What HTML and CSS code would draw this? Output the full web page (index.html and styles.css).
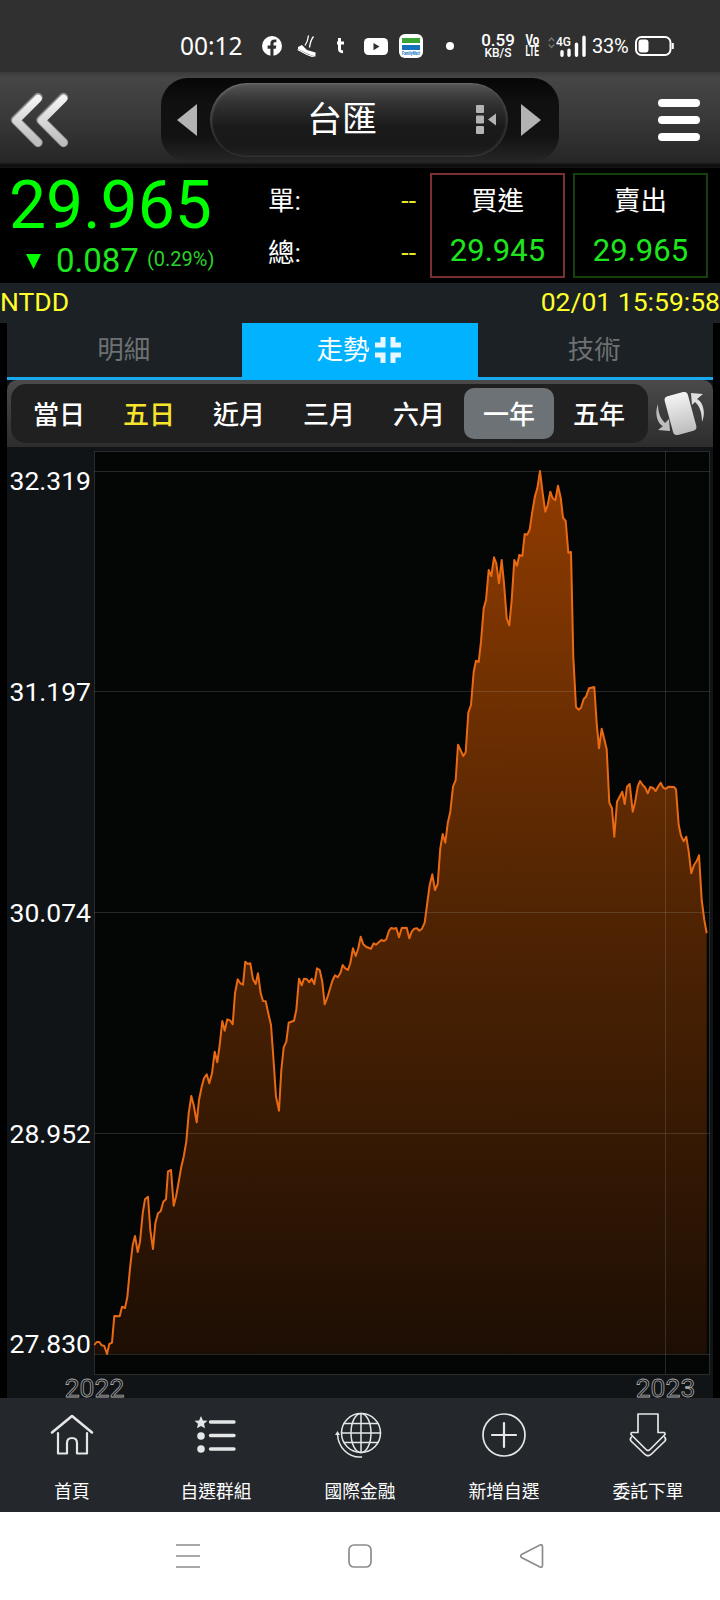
FILE: index.html
```html
<!DOCTYPE html>
<html lang="zh-Hant">
  <head>
    <meta charset="UTF-8">
    <meta name="viewport" content="width=device-width, initial-scale=1.0">
    <title>台匯 走勢</title>
    <link rel="stylesheet" href="styles.css">
  </head>
  <body>
    <div class="status">
      <span class="clock">00:12</span>
      <svg class="s-fb" width="20" height="20" viewBox="0 0 20 20">
        <circle cx="10" cy="10" r="10" fill="#fff"/>
        <path d="M8.4 20v-7.3H5.6V9.6h2.8V7.8c0-2.8 1.5-4.2 4-4.2h2v2.7H13c-1 0-1.5.5-1.5 1.5v1.8h2.8l-.5 3.1h-2.3V20z" fill="#303030"/>
      </svg>
      <svg class="s-shoe" width="20" height="22" viewBox="0 0 20 22">
        <path d="M1 12L5 10 10 15 18.5 17.500Q19.500 21 15 20.500L10 18.500 1 14z" fill="#fff"/>
        <path d="M.6 14.500L10 19.500 15 21.300 18.500 20.500M8 10.500Q11 6 11.500 .5M12.500 12.500Q13.500 5 16.500 1.500" fill="none" stroke="#fff" stroke-width="1.300"/>
      </svg>
      <svg class="s-t" width="8" height="16" viewBox="0 0 8 16">
        <path d="M2.500 0V11Q2.500 14 6 13.600M0 5H7" fill="none" stroke="#fff" stroke-width="3"/>
      </svg>
      <svg class="s-yt" width="24" height="17" viewBox="0 0 24 17">
        <rect width="24" height="17" rx="4.500" fill="#fff"/>
        <path d="M9.500 5v7.200l6-3.600z" fill="#303030"/>
      </svg>
      <svg class="s-fm" width="24" height="24" viewBox="0 0 24 24">
        <rect width="24" height="24" rx="6" fill="#fff"/>
        <rect x="3" y="4" width="18" height="5" fill="#3aa535"/>
        <rect x="3" y="11" width="18" height="5" fill="#1673bb"/>
        <text x="3" y="21" font-size="4.500" font-weight="bold" textLength="18" lengthAdjust="spacingAndGlyphs" fill="#1673bb">FamilyMart</text>
      </svg>
      <i class="s-dot"></i>
      <span class="speed"><b>0.59</b><b>KB/S</b></span>
      <span class="volte"><b>Vo</b><b>LTE</b></span>
      <svg class="s-signal" width="39" height="22" viewBox="0 0 39 22">
        <path d="M.8 6L3.500 3 6.200 6M.8 9.500L3.500 12.500 6.200 9.500" fill="none" stroke="#777" stroke-width="1.300"/>
        <text x="8" y="11" font-size="13.500" font-weight="500" textLength="15" lengthAdjust="spacingAndGlyphs" fill="#fff">4G</text>
        <path d="M14 16.500v3.500M21 15v5M28.500 9v11M36 2v18" stroke="#fff" stroke-width="3.400" stroke-linecap="round" transform="translate(0 .3)"/>
      </svg>
      <span class="percent">33%</span>
      <svg class="s-batt" width="40" height="20" viewBox="0 0 40 20">
        <rect x="1" y="1" width="34.500" height="18" rx="5.500" fill="none" stroke="#fff" stroke-width="2"/>
        <rect x="3.500" y="3.500" width="10" height="13" rx="3" fill="#fff"/>
        <path d="M37.800 7v6" stroke="#fff" stroke-width="2"/>
      </svg>
    </div>

    <header class="header">
      <svg class="back" width="60" height="56" viewBox="0 0 60 56">
        <defs>
          <linearGradient id="silver" x1="0" y1="0" x2="0" y2="1">
            <stop offset="0" stop-color="#f4f4f4"/>
            <stop offset="1" stop-color="#bdbdbd"/>
          </linearGradient>
        </defs>
        <path d="M28 5.500L5.500 28 28 50.500M53.500 5.500L31 28 53.500 50.500" fill="none" stroke="#8a8a8a" stroke-width="9.500" stroke-linecap="round" stroke-linejoin="round"/>
        <path d="M28 6.500L6 28.500 28 50.500M53.500 6.500L31.500 28.500 53.500 50.500" fill="none" stroke="url(#silver)" stroke-width="7.500" stroke-linecap="round" stroke-linejoin="round"/>
      </svg>
      <div class="picker">
        <svg width="20" height="32" viewBox="0 0 20 32"><path d="M0 16L20 0V32z" fill="#b3b3b3"/></svg>
        <div class="picker-name">
          <span>台匯</span>
          <svg width="20" height="30" viewBox="0 0 20 30">
            <g fill="#b3b3b3">
              <rect x="0" y="0" width="8" height="8" rx="1"/>
              <rect x="0" y="10.500" width="8" height="8" rx="1"/>
              <rect x="0" y="21" width="8" height="8" rx="1"/>
              <path d="M12 14.500L20 8.500V20.500z"/>
            </g>
          </svg>
        </div>
        <svg width="20" height="32" viewBox="0 0 20 32"><path d="M20 16L0 0V32z" fill="#b3b3b3"/></svg>
      </div>
      <div class="menu"><i></i><i></i><i></i></div>
    </header>

    <section class="quote">
      <div class="price">
        <div class="last">29.965</div>
        <div class="change">
          <svg width="15" height="15" viewBox="0 0 15 15"><path d="M0 0H15L7.500 15z" fill="#00ff00"/></svg>
          <span class="diff">0.087</span>
          <span class="rate">(0.29%)</span>
        </div>
      </div>
      <div class="volume">
        <div><span>單:</span><b>--</b></div>
        <div><span>總:</span><b>--</b></div>
      </div>
      <div class="deal buy"><span>買進</span><b>29.945</b></div>
      <div class="deal sell"><span>賣出</span><b>29.965</b></div>
    </section>

    <div class="info"><span>NTDD</span><span>02/01 15:59:58</span></div>

    <main class="panel">
      <nav class="tabs">
        <div class="tab">明細</div>
        <div class="tab active">走勢
          <svg width="26" height="26" viewBox="0 0 26 26">
            <path d="M0 8H8V0M18 0V8H26M0 18H8V26M26 18H18V26" fill="none" stroke="#e8f7ff" stroke-width="5"/>
          </svg>
        </div>
        <div class="tab">技術</div>
      </nav>

      <div class="toolbar">
        <div class="periods">
          <span>當日</span>
          <span class="yellow">五日</span>
          <span>近月</span>
          <span>三月</span>
          <span>六月</span>
          <span class="selected">一年</span>
          <span>五年</span>
        </div>
        <svg class="rotate" width="50" height="48" viewBox="0 0 50 48">
          <rect x="13.500" y="3.500" width="24" height="40" rx="4" transform="rotate(-15 25.500 23.500)" fill="url(#silver)"/>
          <path d="M3 14C-1 24 3 34 8 36L3 40 15 41 14 29 10 33C5 28 3 22 3 14z" fill="#bdbdbd"/>
          <path d="M47 32C51 22 48 12 42 9L48 4 36 3 37 15 40 12C45 16 47 23 47 32z" fill="#dedede"/>
        </svg>
      </div>

      <svg class="chart" width="706" height="951" viewBox="7 447 706 951">
        <defs>
          <linearGradient id="fade" gradientUnits="userSpaceOnUse" x1="0" y1="471" x2="0" y2="1354">
            <stop offset="0" stop-color="#903c00"/>
            <stop offset=".5" stop-color="#502403"/>
            <stop offset="1" stop-color="#1d0e04"/>
          </linearGradient>
        </defs>
        <rect x="94.500" y="451.500" width="615" height="923" fill="#040605"/>
        <path id="area" fill="url(#fade)"/>
        <path class="grid" d="M94 471.500H710M94 691.500H710M94 912.500H710M94 1133.500H710M94 1354.500H710M665.500 451V1374"/>
        <rect class="frame" x="94.500" y="451.500" width="615" height="923"/>
        <path id="line" class="line" d="M94.300 1345 96.700 1342 99.300 1342 101.700 1345.300 104.300 1346 107 1354 109.300 1344 112 1342.700 114.300 1316 119.700 1316.300 122 1306.700 125 1308 127.300 1297.300 130 1268.300 132.700 1245 135 1236 137.700 1252 140 1241.700 142.700 1213.300 145 1199.300 148 1196.700 150.300 1230 153 1249 155.300 1223.300 158 1213.300 160.700 1211.300 163.300 1201.700 166 1199.300 168 1171.300 171 1170 173.700 1205.700 176 1196.700 178.700 1181.700 181.300 1166.700 183.700 1156.700 186.300 1141.700 188.700 1113.300 191.300 1096 193.700 1105 196.700 1122.300 199 1100 201.700 1086.700 204 1078.300 206.700 1074.300 209.300 1083.300 212 1073.300 214.700 1051.700 217.300 1062.300 219.700 1045 222.300 1021 224.700 1030.700 227.300 1019.300 230.300 1020.700 232.700 1024.300 235 993.300 237.700 979.300 240.300 983.300 243 984.700 245.300 961.700 247.700 964 250.300 963.300 253 979.300 255.700 984 258 973.300 260.700 993.300 263 1001 265.700 1001.300 268.300 1013.300 271 1025 273.300 1056.700 276 1096.700 279 1110.700 281.300 1070 283.700 1047.300 286.300 1041.700 288.700 1022.700 294 1020.700 296.300 1010 299 978.700 301.700 985.300 304 978.700 307 979.300 309.300 982.300 311.700 978.700 314.300 984 317 968.300 319.700 970 322.300 981.700 324.700 1004.300 327.300 997.700 332.300 981 335 975.300 337.700 977.300 340.300 973.300 342.700 965 345.300 968.300 348 970 350.300 963.300 353 948.300 355.700 956 358.300 948.300 360.700 936.700 363.300 944.300 366 946.700 371 948.700 373.700 943.300 376 944.700 381.300 940 384 941 386.300 939.300 389 930.700 391.300 928 394 928.700 396.300 928 399 937.300 401.700 928 406.700 927.700 409.300 938.300 411.700 931.700 414.300 928.700 417 928.300 419.300 930.700 422 928.700 424.700 922.700 427 905 429.700 885 432.300 874.300 435 890 437.700 884 440.300 848.300 442.700 834 445.300 842.700 447.700 823.300 450.300 811.700 453 786.700 455.700 780 458 744.700 463.300 756 465.700 752.300 468.300 712.700 471 705 473.700 671.700 476 660.700 478.700 662 481 641.700 483.700 608.300 486 600 488.700 570 491.300 576 494 557.300 496.300 563.300 499 583.300 501.700 560 504 583.300 506.700 618.300 509.300 625.300 511.700 600 514.300 560 517 565.700 519.300 555 522.300 556 524.700 534 527.300 534.700 529.700 529.300 532.300 511.700 535 496 537.300 488.300 540 471 542.700 493.300 545.300 511.700 547.700 505 550.300 491.700 552.700 498.300 555.300 500.300 558 485.700 560.700 497.700 563 517.700 565.700 521 568.300 552.700 571 552 573.300 656.700 576 707 578.700 709.700 581 707.700 583.700 699 586 696.700 589 688.300 594.300 687 596.700 723.300 599 748.300 601.700 728.700 604.300 739.300 606.700 749.300 609.300 802.700 612 808.300 614.300 836.700 617 801.700 622.300 791.700 624.700 804 627 786.700 629.700 784 632.700 811.700 635 802.700 637.700 786.700 640 781 642.700 785 645.300 787.700 647.700 793.300 650.300 787 653 788 655.700 791 658 786.700 660.700 782.700 663 787.300 665.700 789 668.300 786.700 674 787 676 789.300 678.700 825 681 835.700 683.700 841.300 686.300 836.700 688.700 851.700 691.300 873.300 694 865 696.700 861 699 855.300 701.700 900 704.300 920 706.700 933.300"/>
        <g class="y-label">
          <text x="91" y="490">32.319</text>
          <text x="91" y="700.500">31.197</text>
          <text x="91" y="922">30.074</text>
          <text x="91" y="1142.500">28.952</text>
          <text x="91" y="1353">27.830</text>
        </g>
        <g class="x-label">
          <text x="94.500" y="1396.500">2022</text>
          <text x="665.500" y="1396.500">2023</text>
        </g>
      </svg>
    </main>

    <nav class="bottom">
      <div class="item">
        <svg width="46" height="46" viewBox="0 0 46 46">
          <path d="M3 20.500L23 4 43 20.500" stroke-width="2.600"/>
          <path d="M9 21V41.500H18V31Q18 26 23 26T28 31V41.500H38V21"/>
        </svg>
        <span>首頁</span>
      </div>
      <div class="item">
        <svg width="46" height="46" viewBox="0 0 46 46">
          <path d="M17.500 10H41M17.500 23.500H41M17.500 37H41" stroke-width="3.400"/>
          <path class="solid" d="M8 4L9.900 8.400 14.500 8.700 11 11.700 12 16.300 8 13.900 4 16.300 5 11.700 1.500 8.700 6.100 8.400z"/>
          <circle class="solid" cx="8" cy="24" r="3.800"/>
          <circle class="solid" cx="8" cy="37" r="3.800"/>
        </svg>
        <span>自選群組</span>
      </div>
      <div class="item">
        <svg width="50" height="46" viewBox="0 0 50 46">
          <g stroke-width="1.500">
            <circle cx="26" cy="21" r="19.500"/>
            <ellipse cx="26" cy="21" rx="10" ry="19.500"/>
            <path d="M26 1.500V40.500M6.500 21H45.500M9 11.500H43M9 30.500H43"/>
            <path d="M2.500 22C3 35 13 46 26.500 45"/>
          </g>
          <path class="solid" d="M0 23L2.500 19 5 23z"/>
        </svg>
        <span>國際金融</span>
      </div>
      <div class="item">
        <svg width="46" height="46" viewBox="0 0 46 46">
          <circle cx="23" cy="23" r="21" stroke-width="1.700"/>
          <path d="M23 11V35M11 23H35"/>
        </svg>
        <span>新增自選</span>
      </div>
      <div class="item">
        <svg width="46" height="46" viewBox="0 0 46 46">
          <path d="M13 2H33V20.500H39Q41 21.500 39.500 23L25 37.500Q23 39.500 21 37.500L6.500 23Q5 21.500 7 20.500H13z" stroke-width="1.700"/>
          <path d="M6.500 25Q4.500 27 6 29L19.500 42Q23 45.500 26.500 42L40 29Q41.500 27 39.500 25" stroke-width="1.700"/>
        </svg>
        <span>委託下單</span>
      </div>
    </nav>

    <div class="system">
      <svg width="24" height="24" viewBox="0 0 24 24"><path d="M0 1H24M0 12H24M0 23H24"/></svg>
      <svg width="24" height="24" viewBox="0 0 24 24"><rect x="1" y="1" width="22" height="22" rx="5"/></svg>
      <svg width="24" height="24" viewBox="0 0 24 24"><path d="M1.500 10.500L20 1Q22.500 0 22.500 3V21Q22.500 24 20 23L1.500 13.500Q0 12 1.500 10.500z"/></svg>
    </div>

    <script>
      // close the price line down to the lowest grid line to get the filled area
      let line = document.getElementById('line').getAttribute('d');
      document.getElementById('area').setAttribute('d', line + 'V1354H94.3z');
    </script>
  </body>
</html>
```

FILE: styles.css
```css
body {
  margin: 0;
  width: 720px;
  height: 1600px;
  overflow: hidden;
  background: #000;
  color: #fff;
  font-family: Roboto, "Noto Sans CJK TC", sans-serif;
}

svg {
  display: block;
  flex: none;
}

b {
  font-weight: normal;
}

/* phone status bar */
.status {
  display: flex;
  align-items: center;
  box-sizing: border-box;
  height: 72px;
  padding: 20px 0 0 180px;
  background: #303030;
}

.status > * {
  flex: none;
}

.clock {
  width: 62px;
  font: 24.500px/30px "Noto Sans", sans-serif;
  white-space: nowrap;
}

.s-fb { margin-left: 20px; }
.s-shoe { margin-left: 15px; }
.s-t { margin-left: 20px; }
.s-yt { margin-left: 19px; }
.s-fm { margin-left: 11px; }

.s-dot {
  width: 8px;
  height: 8px;
  margin-left: 23px;
  border-radius: 50%;
  background: #fff;
}

.speed,
.volte {
  display: flex;
  flex-direction: column;
  align-items: center;
}

.speed {
  width: 36px;
  margin-left: 26px;
  font-size: 12px;
  line-height: 12px;
}

.speed b {
  font-weight: 500;
}

.speed b:first-child {
  font-size: 17px;
  line-height: 14px;
}

.volte {
  width: 16px;
  margin-left: 8px;
  font-size: 14px;
  line-height: 11.500px;
}

.volte b {
  font-weight: bold;
  transform: scaleX(.6);
}

.volte b:first-child {
  transform: scaleX(.82);
}

.s-signal { margin-left: 8px; }

.percent {
  width: 37px;
  margin-left: 5px;
  font-size: 20px;
  letter-spacing: -.3px;
}

.s-batt { margin-left: 6px; }

/* header */
.header {
  display: flex;
  align-items: center;
  box-sizing: border-box;
  height: 96px;
  padding: 0 20px 0 10px;
  background: linear-gradient(#3a3a3a, #464646 6%, #3a3a3a 45%, #262626 94%, #0c0c0c 97%, #151515);
}

.picker {
  display: flex;
  align-items: center;
  justify-content: space-between;
  box-sizing: border-box;
  width: 398px;
  height: 84px;
  margin-left: 91px;
  padding: 0 18px 0 16px;
  border-radius: 27px;
  background: linear-gradient(#060606, #101010 30%, #121212 70%, #262626);
}

.picker-name {
  display: flex;
  align-items: center;
  box-sizing: border-box;
  width: 298px;
  height: 74px;
  padding-left: 97px;
  border-radius: 37px;
  background: linear-gradient(#565656, #343434 25%, #1a1a1a 60%, #191919 85%, #232323);
  box-shadow: inset 2px 1px 2px rgba(255, 255, 255, .15), inset -2px -1px 2px rgba(255, 255, 255, .1);
  font-size: 35px;
  line-height: 40px;
}

.picker-name span {
  padding-top: 2px;
}

.picker-name svg {
  margin-left: 99px;
}

.menu {
  display: flex;
  flex-direction: column;
  gap: 9px;
  width: 42px;
  margin-left: auto;
}

.menu i {
  height: 8px;
  border-radius: 4px;
  background: #fff;
}

/* quote */
.quote {
  display: flex;
  box-sizing: border-box;
  height: 115px;
  padding-right: 11px;
}

.price {
  width: 268px;
  color: #00ff00;
}

.last {
  height: 74px;
  padding: 1px 0 0 9px;
  box-sizing: border-box;
  font-size: 66px;
  line-height: 74px;
}

.change {
  display: flex;
  align-items: center;
  height: 38px;
  padding-left: 26px;
  line-height: 38px;
}

.diff {
  margin-left: 15px;
  font-size: 33px;
  color: #1ee61e;
}

.rate {
  margin: -4px 0 0 8px;
  font-size: 20px;
  color: #2bd22b;
}

.volume {
  width: 148px;
  padding: 7px 1px 0 0;
  font-size: 26.500px;
  line-height: 52px;
}

.volume div {
  display: flex;
  justify-content: space-between;
  height: 52px;
}

.volume b {
  color: #e6e62a;
}

.deal {
  display: flex;
  flex-direction: column;
  align-items: center;
  box-sizing: border-box;
  width: 135px;
  height: 105px;
  margin: 5px 0 0 13px;
  padding-top: 1px;
  border: 2px solid #7a3030;
  font-size: 26.500px;
  line-height: 50px;
}

.deal b {
  font-size: 31px;
  color: #1ee61e;
}

.deal.sell {
  margin-left: 8px;
  border-color: #17400f;
}

.info {
  display: flex;
  justify-content: space-between;
  height: 40px;
  background: #1b2124;
  color: #ffff2b;
  font-size: 26.500px;
  line-height: 38px;
}

/* chart panel */
.panel {
  width: 706px;
  height: 1075px;
  margin: 0 auto;
  background: #111417;
}

.tabs {
  display: flex;
  box-sizing: border-box;
  height: 57px;
  border-bottom: 3px solid #18a9ee;
  background: #1b2124;
  color: #6d7173;
  font-size: 26.500px;
  line-height: 56px;
}

.tab {
  display: flex;
  flex: 1;
  align-items: center;
  justify-content: center;
  gap: 6px;
  padding-right: 2px;
}

.tab.active {
  margin-bottom: -3px;
  padding-bottom: 3px;
  background: #00b2ff;
  color: #fff;
}

.toolbar {
  display: flex;
  align-items: center;
  box-sizing: border-box;
  height: 67px;
  padding-left: 4px;
  border-radius: 10px 10px 0 0;
  background: linear-gradient(#4a4a4a, #2d2d2d);
}

.periods {
  display: flex;
  align-items: center;
  box-sizing: border-box;
  width: 637px;
  height: 59px;
  padding: 0 4px 0 3px;
  border-radius: 15px;
  background: #202020;
  font-size: 26px;
  font-weight: 500;
}

.periods span {
  flex: 1;
  height: 51px;
  border-radius: 10px;
  line-height: 54px;
  text-align: center;
}

.periods .yellow {
  color: #f7e52b;
}

.periods .selected {
  background: #6d7276;
}

.rotate {
  margin-left: 7px;
}

.grid,
.frame {
  fill: none;
  stroke: rgba(200, 210, 210, .16);
}

.line {
  fill: none;
  stroke: #ea6a14;
  stroke-width: 2;
  stroke-linejoin: round;
}

.y-label {
  fill: #fff;
  font-size: 26.500px;
  text-anchor: end;
}

.x-label {
  fill: #111417;
  stroke: #a8a8a8;
  stroke-width: .8;
  font-size: 26.500px;
  text-anchor: middle;
}

/* app navigation */
.bottom {
  display: flex;
  height: 114px;
  background: #24282c;
}

.item {
  display: flex;
  flex: 1;
  flex-direction: column;
  align-items: center;
  padding-top: 14px;
  font-size: 17.700px;
  line-height: 26px;
}

.item span {
  margin-top: 21px;
}

.item svg {
  fill: none;
  stroke: #e4e6e7;
  stroke-width: 2.200;
  stroke-linecap: round;
  stroke-linejoin: round;
  overflow: visible;
}

.item .solid {
  fill: #e4e6e7;
  stroke: none;
}

/* android buttons */
.system {
  display: flex;
  align-items: center;
  justify-content: center;
  gap: 148px;
  height: 88px;
  background: #fff;
}

.system svg {
  fill: none;
  stroke: #8c8c8c;
  stroke-width: 1.700;
}
```
